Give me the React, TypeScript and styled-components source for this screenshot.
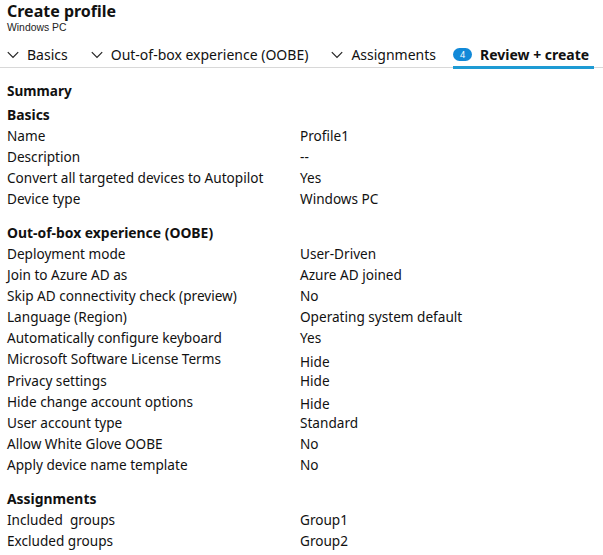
import React from "react";
import styled, { createGlobalStyle } from "styled-components";

const Global = createGlobalStyle`
  html, body { margin: 0; padding: 0; background: #fff; }
  body { font-family: "Noto Sans", "Open Sans", sans-serif; color: #111; }
`;

const Page = styled.div`
  width: 603px;
  padding: 0 0 0 7px;
  box-sizing: border-box;
`;

const Title = styled.div`
  font-size: 16px;
  font-weight: 700;
  line-height: 22px;
`;

const Subtitle = styled.div`
  font-family: "Liberation Sans", Arial, sans-serif;
  font-size: 10.4px;
  line-height: 11.6px;
  color: #222;
`;

const TabBar = styled.div`
  display: flex;
  align-items: flex-start;
  margin-top: 13px;
  margin-left: -7px;
  padding-left: 7px;
  width: 598px;
  height: 20px;
  border-bottom: 1px solid #d8d8d8;
  box-sizing: content-box;
`;

const Tab = styled.div<{ $active?: boolean; $space?: number }>`
  display: flex;
  align-items: center;
  flex-shrink: 0;
  white-space: nowrap;
  gap: 8px;
  height: 22px;
  padding: 0 ${(p) => (p.$active ? "5px" : "0")} 3px 0;
  margin-right: ${(p) => p.$space ?? 0}px;
  font-size: 14px;
  font-weight: ${(p) => (p.$active ? 700 : 400)};
  color: #111;
  box-sizing: border-box;
  border-bottom: 3px solid ${(p) => (p.$active ? "#1e9bd4" : "transparent")};
`;

const Badge = styled.span`
  display: inline-flex;
  align-items: center;
  justify-content: center;
  width: 19px;
  height: 13px;
  border-radius: 7px;
  background: #1189d8;
  color: #fff;
  font-size: 9px;
  font-weight: 400;
`;

const Summary = styled.div`
  font-size: 13.6px;
  font-weight: 700;
  margin-top: 13px;
  line-height: 20px;
`;

const Section = styled.div<{ $first?: boolean }>`
  margin-top: ${(p) => (p.$first ? "3px" : "13px")};
`;

const SectionTitle = styled.div`
  font-size: 13.9px;
  font-weight: 700;
  line-height: 21px;
`;

const Row = styled.div`
  display: grid;
  grid-template-columns: 293px 1fr;
  font-size: 13.6px;
  line-height: 21.1px;
`;

const Label = styled.span`
  white-space: pre;
`;

const Value = styled.span<{ $shift?: number }>`
  position: relative;
  top: ${(p) => p.$shift ?? 0}px;
`;

const Check = () => (
  <svg width="12" height="8" viewBox="0 0 12 8" fill="none">
    <path d="M0.8 1.2 L6 6.4 L11.2 1.2" stroke="#222" strokeWidth="1.2" />
  </svg>
);

type RowData = [string, string, number?];

const sections: { title: string; rows: RowData[] }[] = [
  {
    title: "Basics",
    rows: [
      ["Name", "Profile1"],
      ["Description", "--"],
      ["Convert all targeted devices to Autopilot", "Yes"],
      ["Device type", "Windows PC"],
    ],
  },
  {
    title: "Out-of-box experience (OOBE)",
    rows: [
      ["Deployment mode", "User-Driven"],
      ["Join to Azure AD as", "Azure AD joined"],
      ["Skip AD connectivity check (preview)", "No"],
      ["Language (Region)", "Operating system default"],
      ["Automatically configure keyboard", "Yes"],
      ["Microsoft Software License Terms", "Hide", 3],
      ["Privacy settings", "Hide"],
      ["Hide change account options", "Hide", 2],
      ["User account type", "Standard"],
      ["Allow White Glove OOBE", "No"],
      ["Apply device name template", "No"],
    ],
  },
  {
    title: "Assignments",
    rows: [
      ["Included  groups", "Group1"],
      ["Excluded groups", "Group2"],
    ],
  },
];

export default function App() {
  return (
    <Page>
      <Global />
      <Title>Create profile</Title>
      <Subtitle>Windows PC</Subtitle>
      <TabBar>
        <Tab $space={23}><Check />Basics</Tab>
        <Tab $space={23}><Check />Out-of-box experience (OOBE)</Tab>
        <Tab $space={17}><Check />Assignments</Tab>
        <Tab $active><Badge>4</Badge>Review + create</Tab>
      </TabBar>
      <Summary>Summary</Summary>
      {sections.map((s, i) => (
        <Section key={s.title} $first={i === 0}>
          <SectionTitle>{s.title}</SectionTitle>
          {s.rows.map(([k, v, shift]) => (
            <Row key={k}>
              <Label>{k}</Label>
              <Value $shift={shift}>{v}</Value>
            </Row>
          ))}
        </Section>
      ))}
    </Page>
  );
}
